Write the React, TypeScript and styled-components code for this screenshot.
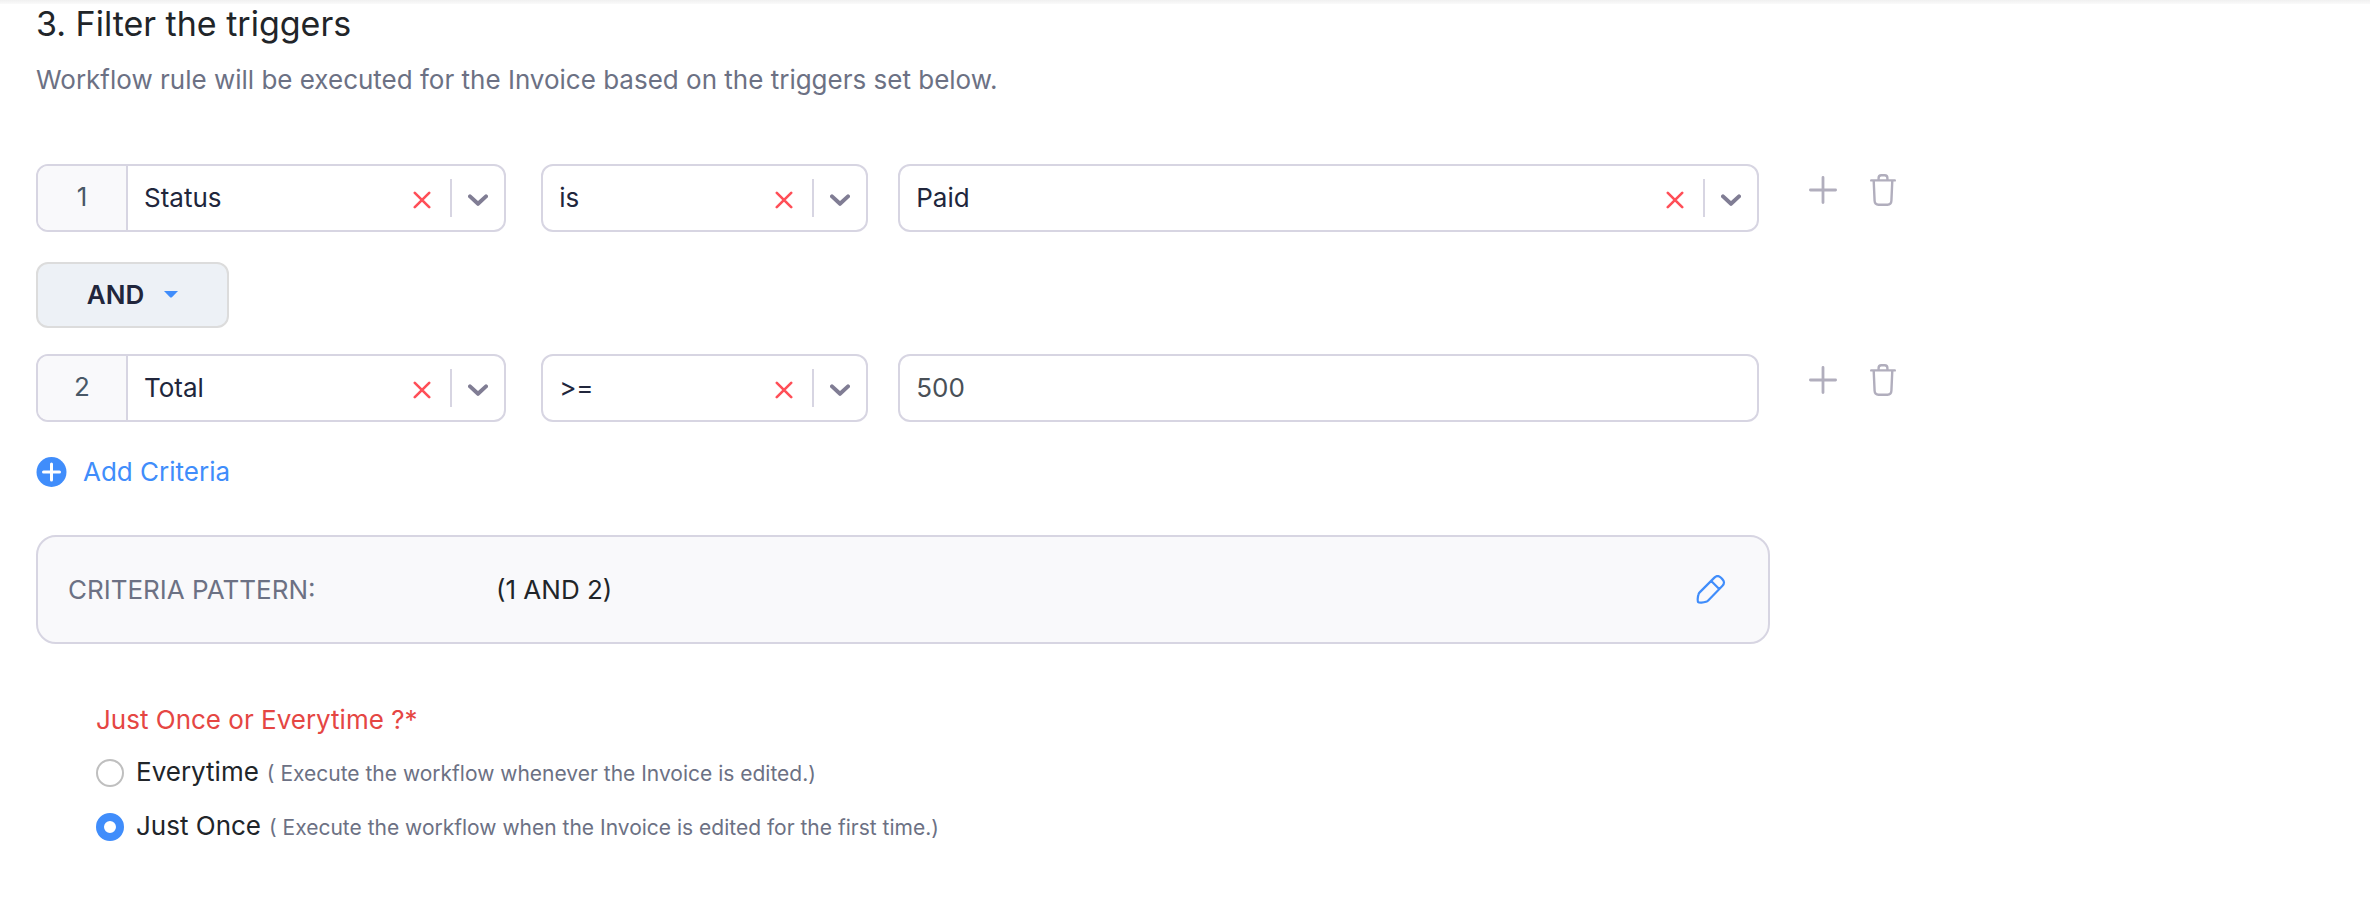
import React, { useState } from 'react';
import styled, { createGlobalStyle } from 'styled-components';

const GlobalStyle = createGlobalStyle`
  *, *::before, *::after { box-sizing: border-box; }
  body {
    margin: 0;
    background: #fff;
    color: #212529;
    font-family: Inter, "Liberation Sans", sans-serif;
    font-size: 26px;
    line-height: 32px;
  }
  button, input, select { font: inherit; color: inherit; margin: 0; }
`;

const TopShadow = styled.div`
  height: 4px;
  background: linear-gradient(#f0f0f0, #fafafa);
`;

const Page = styled.main`
  padding: 0 36px 60px;
`;

const Title = styled.h2`
  margin: 0;
  font-size: 34px;
  line-height: 40px;
  font-weight: 400;
`;

const Subtitle = styled.p`
  margin: 20px 0 68px;
  color: #6c7184;
`;

const CriteriaRow = styled.div`
  display: flex;
`;

const Fields = styled.div`
  display: grid;
  grid-template-columns: 505fr 357fr 861fr;
  width: 75%;
`;

const Field = styled.div<{ $gap?: number }>`
  display: flex;
  align-items: stretch;
  min-width: 0;
  height: 68px;
  margin-right: ${(p) => p.$gap ?? 0}px;
  border: 2px solid #d7d5e2;
  border-radius: 12px;
  background: #fff;
  overflow: hidden;
`;

const RowNumber = styled.span`
  flex: none;
  width: 90px;
  border-right: 2px solid #d7d5e2;
  background: #f9f9fb;
  color: #495867;
  line-height: 62px;
  text-align: center;
`;

const Select = styled.select`
  flex: 1;
  min-width: 0;
  padding: 0 0 0 16px;
  border: 0;
  outline: 0;
  appearance: none;
  background: transparent;
  color: #21263c;
`;

const TextInput = styled.input`
  flex: 1;
  min-width: 0;
  padding: 0 16px;
  border: 0;
  outline: 0;
  background: transparent;
  color: #495057;
`;

const IconButton = styled.button`
  display: flex;
  align-items: center;
  justify-content: center;
  padding: 0;
  border: 0;
  background: transparent;
  cursor: pointer;
`;

const ClearButton = styled(IconButton)`
  width: 36px;
  margin-right: 10px;
  padding-top: 4px;
`;

const Separator = styled.span`
  width: 2px;
  margin: 13px 0;
  background: #d7d5e2;
`;

const Chevron = styled.span`
  display: flex;
  align-items: center;
  justify-content: center;
  width: 52px;
  padding-top: 4px;
`;

const RowActions = styled.div`
  display: flex;
  gap: 20px;
  height: 52px;
  margin-left: 43px;
`;

const ActionButton = styled(IconButton)`
  width: 40px;
`;

const Operator = styled.button`
  display: flex;
  align-items: center;
  justify-content: center;
  gap: 20px;
  width: 193px;
  height: 66px;
  margin: 30px 0 26px;
  padding: 0;
  border: 2px solid #dcdcdc;
  border-radius: 12px;
  background: #edf1f6;
  color: #21263c;
  font-weight: 600;
  cursor: pointer;
`;

const AddCriteria = styled.button`
  display: flex;
  align-items: center;
  gap: 16px;
  margin: 34px 0 47px;
  padding: 0;
  border: 0;
  background: transparent;
  color: #408dfb;
  cursor: pointer;
`;

const Pattern = styled.section`
  display: flex;
  align-items: center;
  width: calc(75% + 10px);
  height: 109px;
  padding: 0 37px 0 30px;
  border: 2px solid #d7d5e2;
  border-radius: 20px;
  background: #f9f9fb;
`;

const PatternLabel = styled.span`
  width: 428px;
  color: #6c7184;
`;

const PatternValue = styled.span`
  flex: 1;
`;

const Frequency = styled.fieldset`
  margin: 60px 0 0 60px;
  padding: 0;
  border: 0;
`;

const Legend = styled.legend`
  margin-bottom: 20px;
  padding: 0;
  color: #e54643;
`;

const Option = styled.label`
  display: flex;
  align-items: center;
  width: max-content;
  margin-bottom: 20px;
  cursor: pointer;
`;

const OptionText = styled.span`
  display: flex;
  align-items: baseline;
`;

const Radio = styled.input`
  appearance: none;
  width: 28px;
  height: 28px;
  margin-right: 12px;
  border: 2px solid #bfbfbf;
  border-radius: 50%;
  background: #fff;

  &:checked { border: 8px solid #408dfb; }
`;

const Hint = styled.small`
  margin-left: 8px;
  color: #6c7184;
  font-size: 21px;
`;

const ClearIcon = () => (
  <svg width="18" height="18" viewBox="0 0 18 18" fill="none" stroke="#ff4f58" strokeWidth="2.6" strokeLinecap="round">
    <path d="M1.8 1.8l14.4 14.4M16.2 1.8L1.8 16.2" />
  </svg>
);

const ChevronIcon = () => (
  <svg width="20" height="14" viewBox="0 0 20 14" fill="none" stroke="#807d94" strokeWidth="4" strokeLinecap="round" strokeLinejoin="round">
    <path d="M2 3.4l8 7.4 8-7.4" />
  </svg>
);

const PlusIcon = () => (
  <svg width="28" height="28" viewBox="0 0 28 28" fill="none" stroke="#b1aebd" strokeWidth="2.8" strokeLinecap="round">
    <path d="M14 1.400v25.200M1.400 14h25.200" />
  </svg>
);

const TrashIcon = () => (
  <svg width="26" height="32" viewBox="0 0 26 32" fill="none" stroke="#b1aebd" strokeWidth="2.4" strokeLinecap="round" strokeLinejoin="round">
    <path d="M1.2 6.400h23.600M8.600 6V4c0-1.600 1.100-2.700 2.700-2.700h3.400c1.600 0 2.700 1.100 2.700 2.700v2M3.700 6.600l.9 20.200c.1 2.300 1.600 3.900 3.900 3.900h9c2.300 0 3.800-1.600 3.900-3.900l.9-20.200" />
  </svg>
);

const CaretIcon = () => (
  <svg width="14" height="8" viewBox="0 0 14 8">
    <path d="M0 0h14l-5.800 6q-1.200 1-2.400 0z" fill="#408dfb" />
  </svg>
);

const PlusCircleIcon = () => (
  <svg width="31" height="31" viewBox="0 0 31 31">
    <circle cx="15.500" cy="15" r="15" fill="#408dfb" />
    <path d="M15.500 7v16M7.500 15h16" stroke="#fff" strokeWidth="3" strokeLinecap="round" />
  </svg>
);

const PencilIcon = () => (
  <svg width="30" height="30" viewBox="0 0 30 30" fill="none" stroke="#408dfb" strokeWidth="2.200" strokeLinecap="round" strokeLinejoin="round">
    <path d="M2.200 27.100c-.8-.8-.6-5.300.3-7.800.3-.9.700-1.500 1.400-2.200L18.400 2.600c2.100-2.100 4.500-1.900 6.600.200l1.300 1.300c2.100 2.100 2.300 4.500.2 6.600L12.200 25.400c-.7.700-1.300 1.100-2.200 1.400-2.500.9-7 1.100-7.800.3zM15.200 6l8 8" />
  </svg>
);

type PickerProps = { label: string; options: string[]; gap?: number; number?: number };

const Picker = ({ label, options, gap, number }: PickerProps) => {
  const [value, setValue] = useState(options[0]);
  return (
    <Field $gap={gap}>
      {number !== undefined && <RowNumber>{number}</RowNumber>}
      <Select aria-label={label} value={value} onChange={(e) => setValue(e.target.value)}>
        <option value="" hidden />
        {options.map((o) => <option key={o}>{o}</option>)}
      </Select>
      <ClearButton type="button" aria-label={`Clear ${label}`} onClick={() => setValue('')}><ClearIcon /></ClearButton>
      <Separator />
      <Chevron><ChevronIcon /></Chevron>
    </Field>
  );
};

const Actions = () => (
  <RowActions>
    <ActionButton type="button" aria-label="Add row"><PlusIcon /></ActionButton>
    <ActionButton type="button" aria-label="Delete row"><TrashIcon /></ActionButton>
  </RowActions>
);

export default function App() {
  const [frequency, setFrequency] = useState('once');
  return (
    <>
      <GlobalStyle />
      <TopShadow />
      <Page>
        <Title>3. Filter the triggers</Title>
        <Subtitle>Workflow rule will be executed for the Invoice based on the triggers set below.</Subtitle>

        <CriteriaRow>
          <Fields>
            <Picker number={1} label="field 1" options={['Status', 'Total']} gap={35} />
            <Picker label="comparator 1" options={['is']} gap={30} />
            <Picker label="value 1" options={['Paid']} />
          </Fields>
          <Actions />
        </CriteriaRow>

        <Operator type="button" aria-haspopup="menu">AND<CaretIcon /></Operator>

        <CriteriaRow>
          <Fields>
            <Picker number={2} label="field 2" options={['Total', 'Status']} gap={35} />
            <Picker label="comparator 2" options={['>=']} gap={30} />
            <Field><TextInput aria-label="value 2" defaultValue="500" /></Field>
          </Fields>
          <Actions />
        </CriteriaRow>

        <AddCriteria type="button"><PlusCircleIcon />Add Criteria</AddCriteria>

        <Pattern>
          <PatternLabel>CRITERIA PATTERN:</PatternLabel>
          <PatternValue>(1 AND 2)</PatternValue>
          <ActionButton type="button" aria-label="Edit criteria pattern"><PencilIcon /></ActionButton>
        </Pattern>

        <Frequency>
          <Legend>Just Once or Everytime ?*</Legend>
          <Option>
            <Radio type="radio" name="frequency" checked={frequency === 'every'} onChange={() => setFrequency('every')} />
            <OptionText>Everytime <Hint>( Execute the workflow whenever the Invoice is edited.)</Hint></OptionText>
          </Option>
          <Option>
            <Radio type="radio" name="frequency" checked={frequency === 'once'} onChange={() => setFrequency('once')} />
            <OptionText>Just Once <Hint>( Execute the workflow when the Invoice is edited for the first time.)</Hint></OptionText>
          </Option>
        </Frequency>
      </Page>
    </>
  );
}
